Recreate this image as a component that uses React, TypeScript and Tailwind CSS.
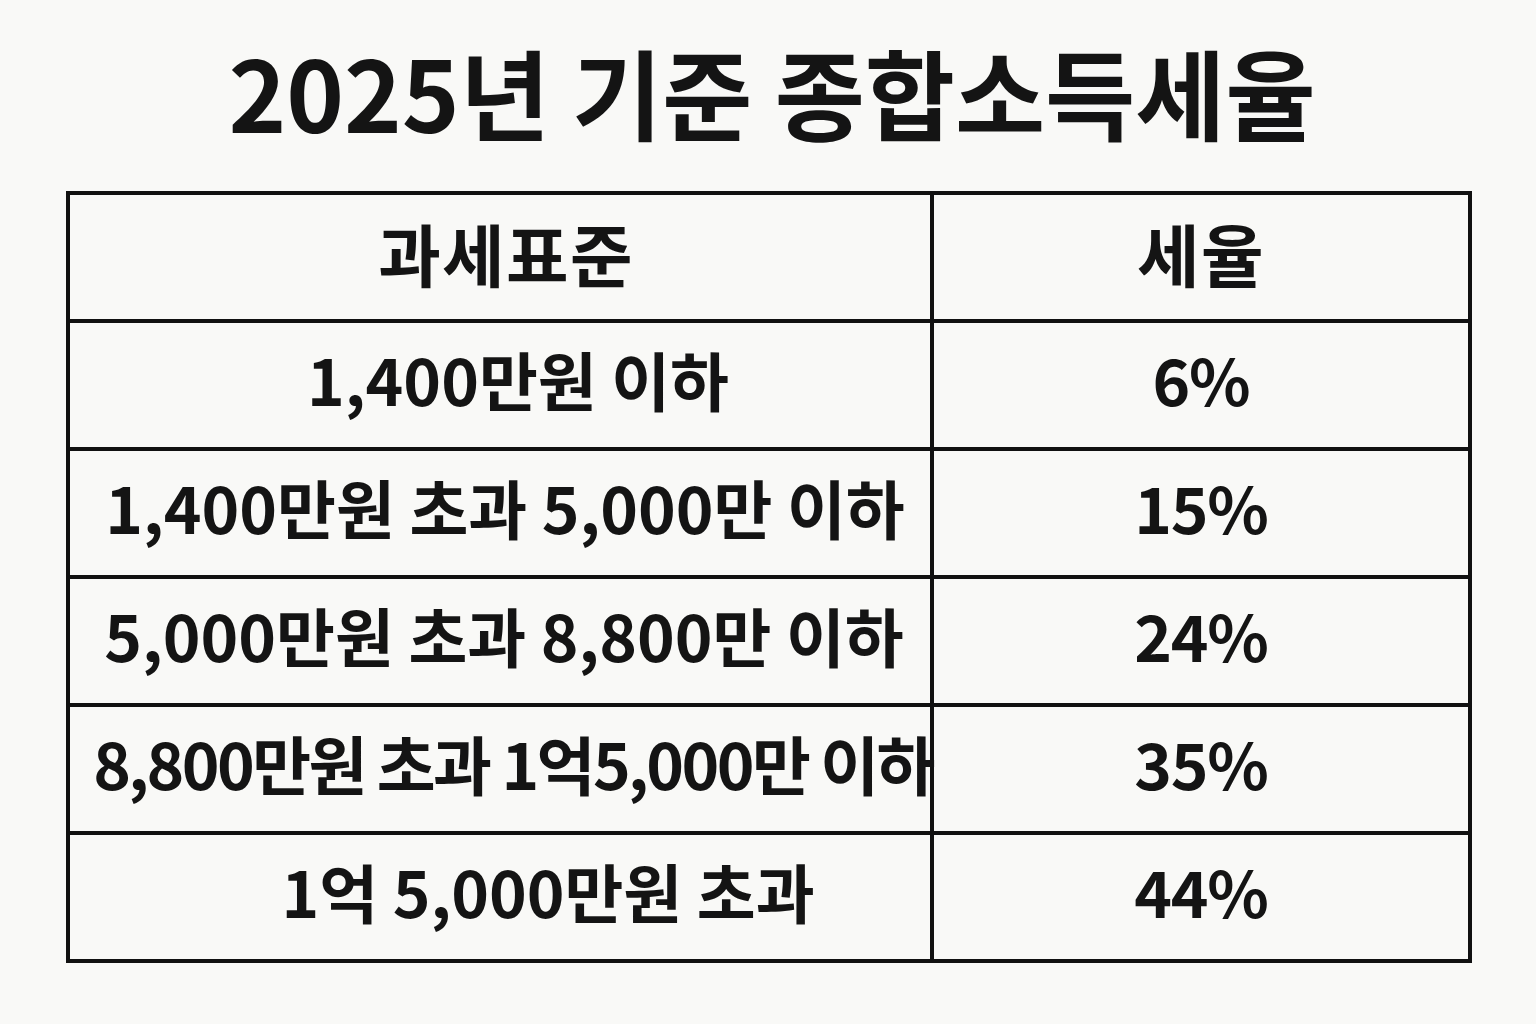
const rows: { base: string; rate: string; cell: string; text: string }[] = [
  { base: '1,400만원 이하', rate: '6%', cell: 'pl-[36px]', text: 'tracking-normal' },
  { base: '1,400만원 초과 5,000만 이하', rate: '15%', cell: 'pl-[10px]', text: 'tracking-normal' },
  { base: '5,000만원 초과 8,800만 이하', rate: '24%', cell: 'pl-[8px]', text: 'tracking-normal' },
  { base: '8,800만원 초과 1억5,000만 이하', rate: '35%', cell: 'pl-[26px]', text: 'tracking-[-0.04em]' },
  { base: '1억 5,000만원 초과', rate: '44%', cell: 'pl-[96px]', text: 'tracking-normal' },
];

const font = "font-['Noto_Sans_CJK_KR','Noto_Sans',sans-serif]";

export default function App() {
  return (
    <div className={`w-full h-[1024px] bg-[#f9f9f7] text-[#141414] ${font} overflow-hidden`}>
      {/* Title */}
      <h1 className="h-[191px] pt-[2px] pb-[14px] pl-[8px] flex items-center justify-center text-[98px] font-bold tracking-normal leading-none">
        2025년 기준 종합소득세율
      </h1>

      {/* Tax table */}
      <div className="ml-[66px] w-[1406px] border-4 border-[#111]">
        <div className="flex h-[124px]">
          <div className="w-[864px] border-r-4 border-[#111] flex items-center justify-center pl-[12px] pb-[8px] text-[68px] font-bold tracking-[0.02em]">
            과세표준
          </div>
          <div className="flex-1 flex items-center justify-center pb-[8px] text-[68px] font-bold tracking-[0.02em]">
            세율
          </div>
        </div>
        {rows.map((r) => (
          <div key={r.rate} className="flex h-[128px] border-t-4 border-[#111]">
            <div className={`w-[864px] border-r-4 border-[#111] flex items-center justify-center pb-[14px] ${r.cell}`}>
              <span className={`whitespace-nowrap text-[64px] font-semibold leading-none ${r.text}`}>
                {r.base}
              </span>
            </div>
            <div className="flex-1 flex items-center justify-center pb-[14px] text-[64px] font-semibold tracking-[-0.02em] leading-none">
              {r.rate}
            </div>
          </div>
        ))}
      </div>
    </div>
  );
}
